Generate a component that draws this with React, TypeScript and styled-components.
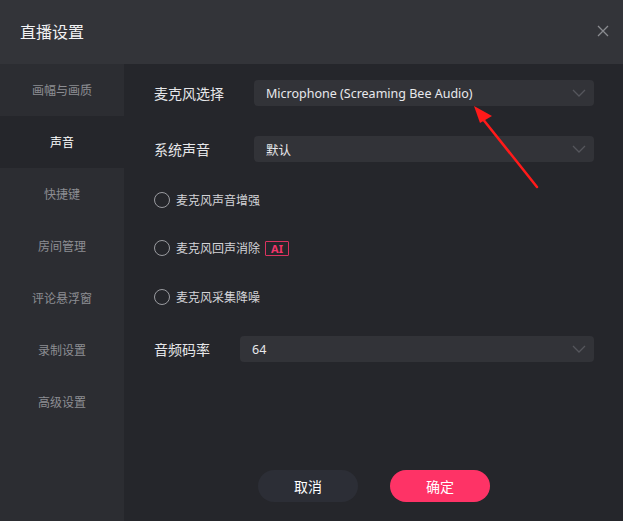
import styled, { createGlobalStyle } from "styled-components";

const GlobalStyle = createGlobalStyle`
  html, body {
    margin: 0;
    padding: 0;
    background: #25262b;
  }
  * {
    box-sizing: border-box;
  }
`;

const FONT = `"Noto Sans", "Noto Sans CJK SC", sans-serif`;

const Dialog = styled.div`
  position: relative;
  width: 623px;
  height: 521px;
  display: flex;
  flex-direction: column;
  background: #25262b;
  font-family: ${FONT};
  overflow: hidden;
`;

const Header = styled.div`
  height: 64px;
  flex-shrink: 0;
  display: flex;
  align-items: center;
  justify-content: space-between;
  padding: 0 10px 2px 20px;
  background: #333439;
`;

const Title = styled.div`
  font-size: 16px;
  color: #f2f2f4;
`;

const CloseButton = styled.button`
  width: 20px;
  height: 20px;
  padding: 0;
  border: none;
  background: transparent;
  display: flex;
  align-items: center;
  justify-content: center;
  cursor: pointer;
`;

const Body = styled.div`
  flex: 1;
  display: flex;
  min-height: 0;
`;

const Sidebar = styled.nav`
  width: 124px;
  flex-shrink: 0;
  background: #2c2d32;
  display: flex;
  flex-direction: column;
`;

const NavItem = styled.div<{ $active?: boolean }>`
  height: 52px;
  display: flex;
  align-items: center;
  justify-content: center;
  padding-bottom: 1px;
  font-size: 12px;
  color: ${(p) => (p.$active ? "#ffffff" : "#8d8e93")};
  background: ${(p) => (p.$active ? "#25262b" : "transparent")};
  cursor: pointer;
`;

const Content = styled.div`
  flex: 1;
  display: flex;
  flex-direction: column;
  padding: 16px 29px 19px 30px;
`;

const FieldRow = styled.div<{ $top?: number }>`
  display: flex;
  align-items: center;
  height: 26px;
  margin-top: ${(p) => p.$top ?? 0}px;
`;

const Label = styled.div<{ $width?: number }>`
  width: ${(p) => (p.$width ? `${p.$width}px` : "auto")};
  margin-right: ${(p) => (p.$width ? 0 : 30)}px;
  flex-shrink: 0;
  font-size: 14px;
  color: #e6e6e9;
`;

const Select = styled.div`
  flex: 1;
  height: 26px;
  border-radius: 4px;
  background: #323338;
  display: flex;
  align-items: center;
  justify-content: space-between;
  padding: 0 8px 0 12px;
  font-size: 12.5px;
  color: #e8e8ec;
  cursor: pointer;
`;

const RadioRow = styled.label<{ $top?: number }>`
  display: flex;
  align-items: center;
  height: 20px;
  margin-top: ${(p) => p.$top ?? 0}px;
  font-size: 12px;
  color: #d4d4d8;
  cursor: pointer;
`;

const RadioCircle = styled.span`
  width: 16px;
  height: 16px;
  border-radius: 50%;
  border: 1.5px solid #9a9ba0;
  margin-right: 6px;
  flex-shrink: 0;
`;

const AiBadge = styled.span`
  margin-left: 5px;
  height: 15px;
  padding: 0 5px;
  border: 1px solid #d9335f;
  border-radius: 1px;
  display: inline-flex;
  align-items: center;
  font-size: 11px;
  font-weight: 700;
  color: #f1356a;
  line-height: 1;
`;

const Footer = styled.div`
  margin-top: auto;
  display: flex;
  justify-content: center;
  gap: 32px;
`;

const Button = styled.button<{ $primary?: boolean }>`
  width: 100px;
  height: 32px;
  border: none;
  border-radius: 16px;
  font-family: ${FONT};
  font-size: 14px;
  color: #ffffff;
  background: ${(p) => (p.$primary ? "#fe3366" : "#2c2e36")};
  cursor: pointer;
`;

const Annotation = styled.svg`
  position: absolute;
  left: 0;
  top: 0;
  pointer-events: none;
`;

function Chevron() {
  return (
    <svg width="14" height="8" viewBox="0 0 14 8">
      <path d="M1 1 L7 7 L13 1" fill="none" stroke="#55565c" strokeWidth="1.3" />
    </svg>
  );
}

const navItems = ["画幅与画质", "声音", "快捷键", "房间管理", "评论悬浮窗", "录制设置", "高级设置"];

export default function App() {
  return (
    <>
      <GlobalStyle />
      <Dialog>
        <Header>
          <Title>直播设置</Title>
          <CloseButton aria-label="close">
            <svg width="12" height="12" viewBox="0 0 12 12">
              <path d="M1 1 L11 11 M11 1 L1 11" stroke="#8a8b90" strokeWidth="1.3" />
            </svg>
          </CloseButton>
        </Header>
        <Body>
          <Sidebar>
            {navItems.map((item) => (
              <NavItem key={item} $active={item === "声音"}>
                {item}
              </NavItem>
            ))}
          </Sidebar>
          <Content>
            <FieldRow>
              <Label $width={100}>麦克风选择</Label>
              <Select>
                <span>Microphone (Screaming Bee Audio)</span>
                <Chevron />
              </Select>
            </FieldRow>
            <FieldRow $top={30}>
              <Label $width={100}>系统声音</Label>
              <Select>
                <span>默认</span>
                <Chevron />
              </Select>
            </FieldRow>
            <RadioRow $top={28}>
              <RadioCircle />
              麦克风声音增强
            </RadioRow>
            <RadioRow $top={28}>
              <RadioCircle />
              麦克风回声消除
              <AiBadge>AI</AiBadge>
            </RadioRow>
            <RadioRow $top={29}>
              <RadioCircle />
              麦克风采集降噪
            </RadioRow>
            <FieldRow $top={29}>
              <Label>音频码率</Label>
              <Select>
                <span>64</span>
                <Chevron />
              </Select>
            </FieldRow>
            <Footer>
              <Button>取消</Button>
              <Button $primary>确定</Button>
            </Footer>
          </Content>
        </Body>
        <Annotation width="623" height="521" viewBox="0 0 623 521">
          <line x1="537" y1="187" x2="482" y2="118" stroke="#ff1a1a" strokeWidth="2.5" strokeLinecap="round" />
          <polygon points="474,106 492,116 480,123" fill="#ff1a1a" />
        </Annotation>
      </Dialog>
    </>
  );
}
